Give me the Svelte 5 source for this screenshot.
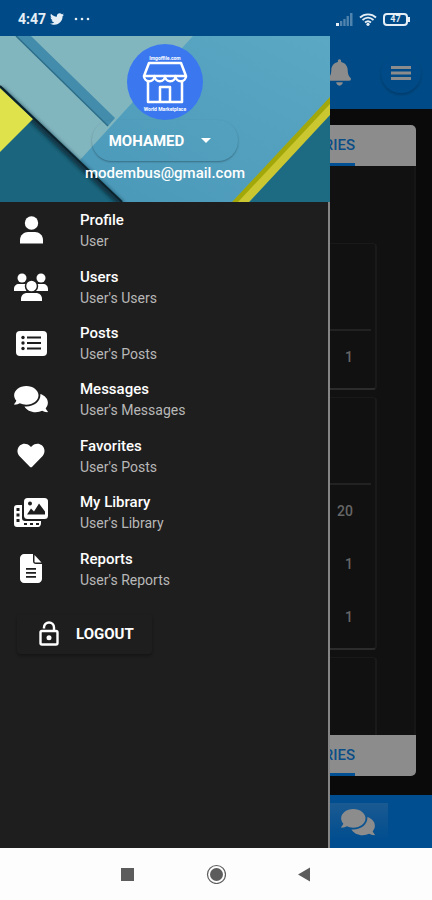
<script>
    let open = $state(true);

    const menu = [
        { icon: "user", title: "Profile", sub: "User" },
        { icon: "users", title: "Users", sub: "User's Users" },
        { icon: "list", title: "Posts", sub: "User's Posts" },
        { icon: "chat", title: "Messages", sub: "User's Messages" },
        { icon: "heart", title: "Favorites", sub: "User's Posts" },
        { icon: "library", title: "My Library", sub: "User's Library" },
        { icon: "report", title: "Reports", sub: "User's Reports" },
    ];

    const cards = [[1], [20, 1, 1], []];
</script>

{#snippet icon(name)}
    {#if name === "user"}
        <svg width="34" height="28" viewBox="0 0 34 28">
            <circle cx="17.500" cy="7" r="6.700" />
            <path d="M6 27.500v-3.500c0-5 4-8 8-8h7c4 0 8 3 8 8v3.500z" />
        </svg>
    {:else if name === "users"}
        <svg width="34" height="28" viewBox="0 0 34 28">
            <circle cx="8" cy="5" r="4.500" />
            <circle cx="27" cy="5" r="4.500" />
            <path d="M0 18v-2c0-3 2-5 5-5h7c2 0 3 1 4 2l-4 5zM34 18v-2c0-3-2-5-5-5h-6c-2 0-3 1-4 2l3 5z" />
            <circle class="ring" cx="17.500" cy="13" r="6" />
            <path d="M7 28v-2c0-4 3-6 6-6h9c3 0 6 2 6 6v2z" />
        </svg>
    {:else if name === "list"}
        <svg width="34" height="28" viewBox="0 0 34 28">
            <rect x="2" y="2" width="31" height="25" rx="4" />
            <g class="cut">
                <circle cx="9" cy="8.500" r="1.700" />
                <circle cx="9" cy="14" r="1.700" />
                <circle cx="9" cy="19.500" r="1.700" />
                <path d="M13 7.500h14v2H13zM13 13h14v2H13zM13 18.500h14v2H13z" />
            </g>
        </svg>
    {:else if name === "chat"}
        <svg width="34" height="30" viewBox="0 0 576 512">
            <path
                d="M416 192c0-88.400-93.100-160-208-160S0 103.600 0 192c0 34.300 14.100 65.900 38 92-13.400 30.200-35.500 54.200-35.800 54.500-2.200 2.300-2.800 5.700-1.500 8.700S4.800 352 8 352c36.600 0 66.900-12.300 88.700-25 32.200 15.700 70.300 25 111.300 25 114.900 0 208-71.600 208-160zm122 220c23.900-26 38-57.700 38-92 0-66.900-53.500-124.200-129.300-148.100.9 6.600 1.300 13.300 1.300 20.100 0 105.900-107.700 192-240 192-10.800 0-21.300-.8-31.700-1.900C207.800 439.600 281.800 480 368 480c41 0 79.100-9.200 111.300-25 21.800 12.700 52.100 25 88.700 25 3.200 0 6.100-1.900 7.300-4.800 1.300-2.900.7-6.300-1.500-8.700-.3-.3-22.400-24.200-35.800-54.500z"
            />
        </svg>
    {:else if name === "heart"}
        <svg width="34" height="27" viewBox="0 0 512 512">
            <path
                d="M462.300 62.600C407.500 15.900 326 24.300 275.700 76.200L256 96.500l-19.700-20.300C186.100 24.300 104.500 15.900 49.700 62.600c-62.800 53.600-66.100 149.800-9.900 207.900l193.500 199.800c12.500 12.900 32.800 12.900 45.300 0l193.500-199.800c56.300-58.100 53-154.300-9.800-207.900z"
            />
        </svg>
    {:else if name === "library"}
        <svg width="34" height="29" viewBox="0 0 34 29">
            <path d="M3 7h5v13c0 2 1 3 3 3h16v2c0 2-1 4-3 4H3c-2 0-3-1-3-3V10c0-2 1-3 3-3z" />
            <path class="cut" d="M2.500 10h3v3h-3zM2.500 15.500h3v3h-3zM2.500 21h3v3h-3zM10 25h3v2h-3zM16 25h3v2h-3zM22 25h3v2h-3z" />
            <rect x="10" y="0" width="24" height="21" rx="3.500" />
            <path class="cut" d="M13 16.500l4-6 3 3 5-8 6 8v3z" />
            <circle class="cut" cx="16" cy="5.500" r="2" />
        </svg>
    {:else if name === "report"}
        <svg width="34" height="29" viewBox="0 0 34 29">
            <path d="M10 0h9v7c0 2 1 3 3 3h6v15c0 2-2 4-4 4H10c-2 0-4-2-4-4V4c0-2 2-4 4-4z" />
            <path d="M20.500 1L27.500 8.500h-6c-.6 0-1-.4-1-1z" />
            <path class="cut" d="M12 14h10v1.700H12zM12 18h10v1.700H12zM12 22h10v1.700H12z" />
        </svg>
    {/if}
{/snippet}

<div class="app">
    <div class="status">
        <span class="time">4:47</span>
        <svg width="14" height="14" viewBox="0 0 512 512">
            <path
                d="M459.370 151.716c.325 4.548.325 9.097.325 13.645 0 138.720-105.583 298.558-298.558 298.558-59.452 0-114.680-17.219-161.137-47.106 8.447.974 16.568 1.299 25.340 1.299 49.055 0 94.213-16.568 130.274-44.832-46.132-.975-84.792-31.188-98.112-72.772 6.498.974 12.995 1.624 19.818 1.624 9.421 0 18.843-1.300 27.614-3.573-48.081-9.747-84.143-51.980-84.143-102.985v-1.299c13.969 7.797 30.214 12.670 47.431 13.319-28.264-18.843-46.781-51.005-46.781-87.391 0-19.492 5.197-37.360 14.294-52.954 51.655 63.675 129.300 105.258 216.365 109.807-1.624-7.797-2.599-15.918-2.599-24.040 0-57.828 46.782-104.934 104.934-104.934 30.213 0 57.502 12.670 76.670 33.137 23.715-4.548 46.456-13.320 66.599-25.340-7.798 24.366-24.366 44.833-46.132 57.827 21.117-2.273 41.584-8.122 60.426-16.243-14.292 20.791-32.161 39.308-52.628 54.253z"
            />
        </svg>
        <svg class="dots" width="16" height="4" viewBox="0 0 16 4">
            <circle cx="2" cy="2" r="1.300" />
            <circle cx="8" cy="2" r="1.300" />
            <circle cx="14" cy="2" r="1.300" />
        </svg>
        <span class="grow"></span>
        <svg width="17" height="13" viewBox="0 0 17 13">
            <path d="M0 10h3v3H0z" />
            <path opacity=".35" d="M4 8h2.300v5H4zM7.300 6h2.300v7H7.300zM10.600 3h2.300v10h-2.300zM14 0h2.500v13H14z" />
        </svg>
        <svg width="18" height="13" viewBox="0 0 18 13">
            <g fill="none" stroke="#e6eef6" stroke-width="1.800">
                <path d="M1 4.500C5.500 .2 12.500 .2 17 4.500" />
                <path d="M3.500 7C7 3.900 11 3.900 14.500 7" />
                <path d="M6 9.500C8 7.800 10 7.800 12 9.500" />
            </g>
            <circle cx="9" cy="11.300" r="1.600" />
        </svg>
        <span class="battery">47</span>
    </div>

    <div class="stage">
        <header class="appbar">
            <button class="bar-btn" aria-label="Notifications">
                <svg width="23" height="27" viewBox="0 0 448 512">
                    <path
                        d="M224 512c35.320 0 63.970-28.650 63.970-64H160.030c0 35.350 28.650 64 63.970 64zm215.390-149.710c-19.320-20.760-55.470-51.990-55.470-154.290 0-77.700-54.480-139.900-127.940-155.160V32c0-17.670-14.320-32-31.980-32s-31.980 14.330-31.980 32v20.840C118.560 68.100 64.080 130.300 64.080 208c0 102.300-36.150 133.530-55.470 154.290-6 6.450-8.660 14.160-8.610 21.710.11 16.400 12.980 32 32.100 32h383.800c19.120 0 32-15.600 32.100-32 .05-7.550-2.610-15.270-8.610-21.710z"
                    />
                </svg>
            </button>
            <button class="bar-btn raised" aria-label="Menu" onclick={() => (open = !open)}>
                <svg width="20" height="16" viewBox="0 0 20 16">
                    <path d="M0 1h20v3H0zM0 6.500h20v3H0zM0 12h20v3H0z" />
                </svg>
            </button>
        </header>

        <main>
            <section class="panel">
                <div class="tabs"><button>CATEGORIES</button></div>
                <div class="cards">
                    {#each cards as values}
                        <div class="card">
                            <div class="card-head"></div>
                            {#each values as value}
                                <div class="value">{value}</div>
                            {/each}
                        </div>
                    {/each}
                </div>
                <div class="tabs bottom"><button>CATEGORIES</button></div>
            </section>
        </main>

        <footer>
            <button class="chat-btn" aria-label="Messages">{@render icon("chat")}</button>
        </footer>

        {#if open}
            <aside>
                <div class="profile">
                    <svg class="art" viewBox="0 0 330 166" preserveAspectRatio="none">
                        <defs>
                            <linearGradient id="fold" x1="0" y1="1" x2="1" y2="0">
                                <stop offset="0" stop-color="#4896b7" />
                                <stop offset="1" stop-color="#5ba8c4" />
                            </linearGradient>
                            <filter id="soft"><feGaussianBlur stdDeviation="2" /></filter>
                        </defs>
                        <rect width="330" height="166" fill="url(#fold)" />
                        <path fill="#82b6bf" d="M0 0h193L80 124 0 50z" />
                        <path fill="#438cab" d="M16 0h15l84 82-7 8z" />
                        <path stroke="#2c6e8a" stroke-width="1.500" d="M16 0l92 90" />
                        <path fill="#1b667e" d="M0 50l122 116H0z" />
                        <path stroke="#0a2c38" stroke-width="5" filter="url(#soft)" d="M0 53l122 116" />
                        <path fill="#dfe24b" d="M0 52l33 31L0 116z" />
                        <path stroke="#0c222b" stroke-width="2" d="M0 50l122 116" />
                        <path fill="#1d6b83" d="M330 78v88h-81z" />
                        <path fill="#a3a80a" d="M330 61v10l-90 95h-8z" />
                        <path fill="#cbc730" d="M330 68v11l-81 87h-11z" />
                    </svg>
                    <svg class="avatar" width="76" height="76" viewBox="0 0 76 76">
                        <circle cx="38" cy="38" r="38" fill="#3b78f0" />
                        <text x="38" y="16" text-anchor="middle">Imgoffile.com</text>
                        <g fill="none" stroke="#fff" stroke-width="2.500" stroke-linejoin="round">
                            <path d="M22 19h32l5 13H17z" />
                            <path d="M17 32a5 5 0 0 0 10.500 0a5 5 0 0 0 10.500 0a5 5 0 0 0 10.500 0a5 5 0 0 0 10.500 0" />
                            <path d="M21 37v21h34V37" />
                            <path d="M33 58V43h10v15" />
                        </g>
                        <text x="38" y="67" text-anchor="middle">World Marketplace</text>
                    </svg>
                    <button class="name">
                        MOHAMED
                        <svg width="10" height="5" viewBox="0 0 10 5"><path d="M0 0h10L5 5z" /></svg>
                    </button>
                    <div class="email">modembus@gmail.com</div>
                </div>

                <div class="body">
                    <nav>
                        {#each menu as item}
                            <a href="#{item.icon}">
                                {@render icon(item.icon)}
                                <span class="label">
                                    <span class="title">{item.title}</span>
                                    <span class="sub">{item.sub}</span>
                                </span>
                            </a>
                        {/each}
                    </nav>
                    <button class="logout">
                        <svg width="22" height="26" viewBox="0 0 22 26">
                            <g fill="none" stroke="#fff" stroke-width="2.400">
                                <path d="M6 10V6.500a5 5 0 0 1 10 0V10" stroke-dasharray="0 2.500 40" />
                                <rect x="2.500" y="10" width="17" height="13.500" rx="1.500" />
                            </g>
                            <circle cx="11" cy="16.800" r="2.500" />
                        </svg>
                        LOGOUT
                    </button>
                </div>
            </aside>
        {/if}
    </div>

    <div class="sysnav">
        <button aria-label="Recent apps">
            <svg width="20" height="20" viewBox="0 0 20 20"><path d="M4 4h13v13H4z" /></svg>
        </button>
        <button aria-label="Home">
            <svg width="20" height="20" viewBox="0 0 20 20">
                <circle cx="10.500" cy="10.500" r="9" fill="none" stroke="#5c5c5c" stroke-width="1.200" />
                <circle cx="10.500" cy="10.500" r="6.500" />
            </svg>
        </button>
        <button aria-label="Back">
            <svg width="20" height="20" viewBox="0 0 20 20"><path d="M3 10.500l12-7v14z" /></svg>
        </button>
    </div>
</div>

<style>
    :global(body) {
        margin: 0;
        background: #0a0a0a;
        font-family: Roboto, "Liberation Sans", sans-serif;
    }
    button {
        border: 0;
        padding: 0;
        background: none;
        color: inherit;
        font: inherit;
        cursor: pointer;
    }
    svg {
        display: block;
        flex: none;
        fill: currentColor;
    }
    .app {
        display: flex;
        flex-direction: column;
        height: 100vh;
        overflow: hidden;
    }

    .status {
        display: flex;
        align-items: center;
        gap: 6px;
        height: 36px;
        padding: 2px 24px 0 18px;
        box-sizing: border-box;
        background: #004b87;
        color: #e6eef6;
    }
    .time {
        font-size: 14px;
        font-weight: 700;
        margin-right: -2px;
    }
    .dots {
        margin-left: 4px;
    }
    .grow {
        flex: 1;
    }
    .battery {
        position: relative;
        width: 21px;
        border: 2px solid #e6eef6;
        border-radius: 4px;
        font-size: 9px;
        font-weight: 700;
        line-height: 9px;
        text-align: center;
    }
    .battery::after {
        content: "";
        position: absolute;
        top: 2px;
        right: -4px;
        width: 2px;
        height: 5px;
        background: #e6eef6;
    }

    .stage {
        position: relative;
        flex: 1;
        min-height: 0;
        display: flex;
        flex-direction: column;
    }
    .appbar {
        display: flex;
        justify-content: flex-end;
        align-items: center;
        gap: 22px;
        height: 73px;
        padding-right: 11px;
        background: #004b87;
        color: #8c8c8c;
    }
    .bar-btn {
        display: grid;
        place-items: center;
        width: 40px;
        height: 40px;
        border-radius: 50%;
    }
    .raised {
        box-shadow: 0 2px 3px rgba(0, 0, 0, 0.2);
    }

    main {
        flex: 1;
        min-height: 0;
        display: flex;
        padding: 16px 16px 19px;
        background: #0a0a0a;
    }
    .panel {
        flex: 1;
        display: flex;
        flex-direction: column;
        border-radius: 5px;
        overflow: hidden;
        background: #111;
    }
    .tabs {
        display: flex;
        justify-content: flex-end;
        height: 41px;
        flex: none;
        padding-right: 61px;
        background: #8c8c8c;
    }
    .tabs button {
        padding-top: 2px;
        border-bottom: 3px solid #004f93;
        color: #0b4d86;
        font-size: 15px;
        font-weight: 500;
    }
    .cards {
        flex: 1;
        min-height: 0;
        overflow: hidden;
        display: flex;
        flex-direction: column;
        gap: 7px;
        padding: 77px 37px 0 16px;
        border-right: 2px solid #161616;
    }
    .card {
        flex: none;
        padding: 0 4px 4px;
        border: 1px solid #191919;
        border-right: 2px solid #1a1a1a;
        border-bottom: 2px solid #2c2c2c;
        border-radius: 4px;
    }
    .card-head {
        height: 85px;
        border-bottom: 2px solid #222;
    }
    .value {
        padding-right: 18px;
        color: #666;
        font-size: 14px;
        font-weight: 500;
        line-height: 53px;
        text-align: right;
    }

    footer {
        display: flex;
        justify-content: flex-end;
        align-items: center;
        height: 53px;
        padding-right: 44px;
        background: #004d8f;
        color: #8c8c8c;
    }
    .chat-btn {
        padding: 4px 13px;
        background: linear-gradient(#1a5a92, #004d8f);
    }

    aside {
        position: absolute;
        top: 0;
        bottom: 0;
        left: 0;
        width: 330px;
        max-width: 90%;
        display: flex;
        flex-direction: column;
        color: #fff;
    }
    .profile {
        position: relative;
        display: flex;
        flex-direction: column;
        align-items: center;
        height: 166px;
        padding-top: 8px;
        box-sizing: border-box;
    }
    .art {
        position: absolute;
        inset: 0;
        width: 100%;
        height: 100%;
    }
    .avatar,
    .name,
    .email {
        position: relative;
    }
    .avatar text {
        font-size: 5px;
        font-weight: 700;
    }
    .name {
        display: flex;
        align-items: center;
        gap: 17px;
        height: 41px;
        padding: 0 27px 0 17px;
        border-radius: 20px;
        font-size: 15px;
        font-weight: 700;
        box-shadow: 0 1px 2px rgba(0, 0, 0, 0.3);
    }
    .email {
        font-size: 15px;
        font-weight: 500;
        line-height: 24px;
    }
    .body {
        flex: 1;
        background: #1e1e1e;
        border-right: 2px solid #858585;
    }
    nav {
        display: grid;
        grid-auto-rows: 1fr;
        height: 395px;
    }
    nav a {
        display: flex;
        align-items: center;
        gap: 32px;
        padding-left: 14px;
        color: #fff;
        text-decoration: none;
    }
    .label {
        padding-top: 2px;
    }
    .title,
    .sub {
        display: block;
        line-height: 21px;
    }
    .title {
        font-size: 15px;
        font-weight: 500;
    }
    .sub {
        color: #b8b8b8;
        font-size: 14px;
    }
    .cut {
        fill: #1e1e1e;
    }
    .ring {
        stroke: #1e1e1e;
        stroke-width: 1.5px;
    }
    .logout {
        display: flex;
        align-items: center;
        gap: 16px;
        height: 40px;
        margin: 17px 0 0 17px;
        padding: 0 18px 0 21px;
        border-radius: 4px;
        font-size: 15px;
        font-weight: 700;
        box-shadow: 0 2px 3px rgba(0, 0, 0, 0.3);
    }

    .sysnav {
        display: flex;
        justify-content: center;
        align-items: center;
        gap: 69px;
        height: 52px;
        background: #fdfdfd;
        color: #5c5c5c;
    }
</style>
